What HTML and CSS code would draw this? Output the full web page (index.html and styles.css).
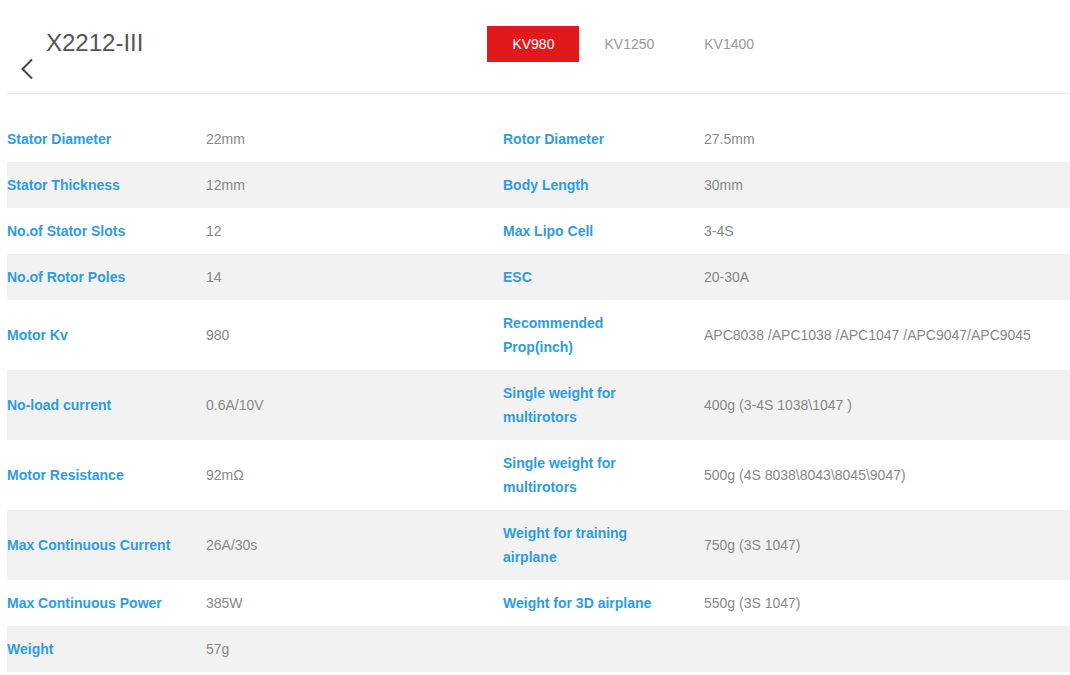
FILE: index.html
```html
<!DOCTYPE html>
<html>
<head>
<meta charset="utf-8">
<link rel="stylesheet" href="styles.css">
</head>
<body>
<div class="page">
  <header class="header">
    <div class="back">
      <svg width="14" height="22" viewBox="0 0 14 22"><path d="M12 1.5 L2.5 11 L12 20.5" fill="none" stroke="#444" stroke-width="2"/></svg>
    </div>
    <h1 class="title">X2212-III</h1>
    <nav class="tabs">
      <span class="tab active">KV980</span>
      <span class="tab">KV1250</span>
      <span class="tab">KV1400</span>
    </nav>
  </header>
  <div class="specs">
    <div class="row"><div class="label">Stator Diameter</div><div class="value">22mm</div><div class="label label2">Rotor Diameter</div><div class="value">27.5mm</div></div>
    <div class="row"><div class="label">Stator Thickness</div><div class="value">12mm</div><div class="label label2">Body Length</div><div class="value">30mm</div></div>
    <div class="row"><div class="label">No.of Stator Slots</div><div class="value">12</div><div class="label label2">Max Lipo Cell</div><div class="value">3-4S</div></div>
    <div class="row"><div class="label">No.of Rotor Poles</div><div class="value">14</div><div class="label label2">ESC</div><div class="value">20-30A</div></div>
    <div class="row"><div class="label">Motor Kv</div><div class="value">980</div><div class="label label2">Recommended Prop(inch)</div><div class="value">APC8038 /APC1038 /APC1047 /APC9047/APC9045</div></div>
    <div class="row"><div class="label">No-load current</div><div class="value">0.6A/10V</div><div class="label label2">Single weight for multirotors</div><div class="value">400g (3-4S 1038\1047 )</div></div>
    <div class="row"><div class="label">Motor Resistance</div><div class="value">92mΩ</div><div class="label label2">Single weight for multirotors</div><div class="value">500g (4S 8038\8043\8045\9047)</div></div>
    <div class="row"><div class="label">Max Continuous Current</div><div class="value">26A/30s</div><div class="label label2">Weight for training airplane</div><div class="value">750g (3S 1047)</div></div>
    <div class="row"><div class="label">Max Continuous Power</div><div class="value">385W</div><div class="label label2">Weight for 3D airplane</div><div class="value">550g (3S 1047)</div></div>
    <div class="row"><div class="label">Weight</div><div class="value">57g</div><div class="label label2"></div><div class="value"></div></div>
  </div>
</div>
</body>
</html>
```

FILE: styles.css
```css
html, body {
  margin: 0;
  padding: 0;
  background: #fff;
  font-family: "Liberation Sans", Arial, sans-serif;
}
.page {
  margin-left: 7px;
  width: 1063px;
}
.header {
  display: flex;
  align-items: flex-start;
  height: 93px;
  border-bottom: 1px solid #e6e6e6;
}
.back {
  margin-left: 13px;
  margin-top: 58px;
  width: 14px;
  height: 22px;
}
.back svg { display: block; }
.title {
  margin: 29px 0 0 12px;
  font-size: 24px;
  line-height: 28px;
  font-weight: normal;
  color: #555;
}
.tabs {
  display: flex;
  margin-left: 344px;
  margin-top: 26px;
}
.tab {
  height: 36px;
  line-height: 36px;
  padding: 0 25px;
  font-size: 14px;
  color: #999;
}
.tab.active {
  background: #e2191c;
  color: #fff;
}
.specs {
  margin-top: 22px;
}
.row {
  display: grid;
  grid-template-columns: 199px 297px 201px 1fr;
  align-items: center;
}
.row:nth-child(even) {
  background: #f2f2f2;
}
.label, .value {
  padding: 11px 0;
  line-height: 24px;
  font-size: 14px;
}
.label {
  font-weight: bold;
  color: #2e9be6;
  padding-right: 32px;
}
.label2 {
  padding-right: 36px;
}
.value {
  color: #888;
}
```
